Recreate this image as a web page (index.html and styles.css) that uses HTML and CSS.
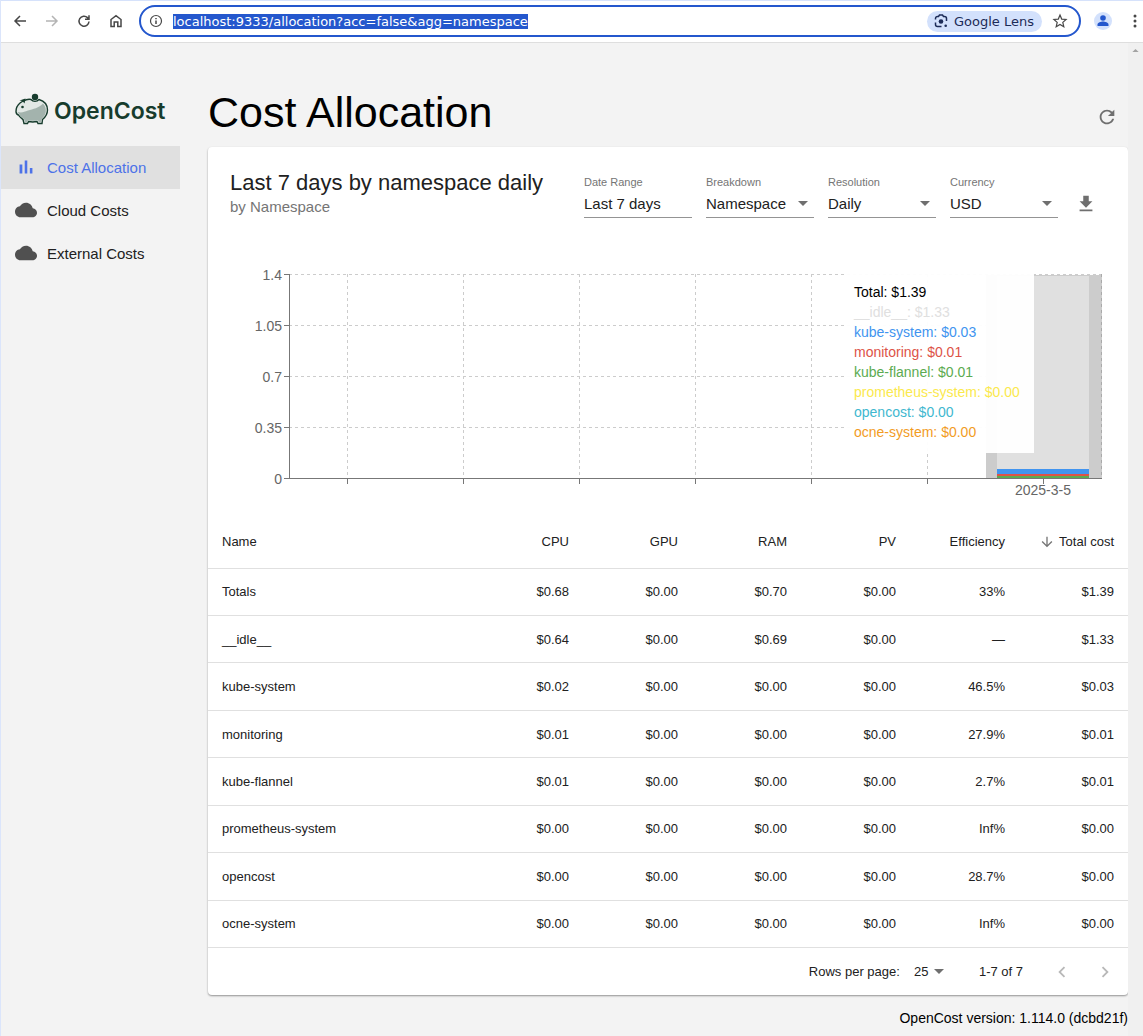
FILE: index.html
```html
<!DOCTYPE html>
<html lang="en">
<head>
    <meta charset="utf-8">
    <title>OpenCost</title>
    <meta name="viewport" content="width=device-width, initial-scale=1.0">
    <link rel="stylesheet" href="styles.css">
</head>
<body>

<header class="toolbar">
    <button class="tool" aria-label="Back">
        <svg viewBox="0 0 16 16"><path d="M14 8H3M8 3L3 8l5 5" class="line"/></svg>
    </button>
    <button class="tool tool-off" aria-label="Forward" disabled>
        <svg viewBox="0 0 16 16"><path d="M2 8h11M8 3l5 5-5 5" class="line"/></svg>
    </button>
    <button class="tool" aria-label="Reload">
        <svg viewBox="0 0 16 16"><path d="M13 8.500A5 5 0 1 1 11.500 4.600L13 6M13 2.200v4H9" class="line"/></svg>
    </button>
    <button class="tool" aria-label="Home">
        <svg viewBox="0 0 16 16"><path d="M3 13.500V6.500L8 2.600l5 3.900v7H9.800V9H6.200v4.500z" class="line"/></svg>
    </button>
    <div class="omnibox">
        <svg class="info" viewBox="0 0 16 16"><circle cx="8" cy="8" r="5.500" class="line thin"/><path d="M8 7.500V11M8 5v1.300" class="line"/></svg>
        <div class="address"><a class="url" href="#">localhost:9333/allocation?acc=false&amp;agg=namespace</a></div>
        <button class="lens">
            <svg viewBox="0 0 16 16"><path d="M2.500 6.500V5.500a2 2 0 0 1 2-2h1l1-1.500h3l1 1.500h1a2 2 0 0 1 2 2v2.500M2.500 9.500v2a2 2 0 0 0 2 2h4" class="line"/><circle cx="8" cy="8.500" r="2.300"/><circle cx="12.700" cy="12.800" r="1.300"/></svg>
            Google Lens
        </button>
        <button class="star" aria-label="Bookmark">
            <svg viewBox="0 0 16 16"><path d="M8 2l1.700 4.100 4.400.4-3.300 2.900 1 4.300L8 11.400l-3.800 2.300 1-4.300L1.900 6.500l4.400-.4z" class="line thin"/></svg>
        </button>
    </div>
    <button class="profile" aria-label="Profile">
        <svg viewBox="0 0 18 18"><circle cx="9" cy="6" r="2.800"/><path d="M3.500 14v-1.500c0-2 3.500-3 5.500-3s5.500 1 5.500 3V14z"/></svg>
    </button>
    <button class="more" aria-label="Menu">
        <svg viewBox="0 0 16 16"><circle cx="8" cy="3" r="1.500"/><circle cx="8" cy="8" r="1.500"/><circle cx="8" cy="13" r="1.500"/></svg>
    </button>
</header>

<div class="page">
    <nav class="sidebar">
        <a class="logo" href="#">
            <svg viewBox="0 0 34 34">
                <path class="pig" d="M8 8C11 6.500 14 6 16 6.500C18 9 22 9 24 6.500C29 8 32.500 12 32.500 17C32.500 21 30.500 24 27.500 26.500L27 30.500H23L22 28.500C19.500 29 16 29 13.500 28.500L12.500 30.500H9L8 26.500C6 25 4.500 24 3.500 22C1.500 21.500 1 20.500 1 18.500C1 15 2 12.500 5 10z"/>
                <path class="belly" d="M2.500 19C7 20 9 19 13 17.500C18 16 24 15 28 10.500C32 15 32 21 27 25.500L26 29.500h-2l-1.200-2.200C20 28 16 28 13 27.300L12 29.500H10L9 26C6.500 24.500 5 23 4 21z"/>
                <path d="M4.500 7.500L10.500 5.500L9.500 10.500L7.500 8z"/>
                <circle cx="7.500" cy="14" r="1.300"/>
                <circle cx="20" cy="4" r="3.200"/>
            </svg>
            <span>OpenCost</span>
        </a>
        <a class="nav-item active" href="#">
            <svg viewBox="0 0 24 24"><path d="M5 9.200h3V19H5zM10.600 5h2.800v14h-2.800zm5.600 8H19v6h-2.800z"/></svg>
            Cost Allocation
        </a>
        <a class="nav-item" href="#">
            <svg viewBox="0 0 24 24"><path d="M19.350 10.040C18.670 6.590 15.640 4 12 4 9.110 4 6.600 5.640 5.350 8.040 2.340 8.360 0 10.910 0 14c0 3.310 2.690 6 6 6h13c2.760 0 5-2.240 5-5 0-2.640-2.050-4.780-4.650-4.960z"/></svg>
            Cloud Costs
        </a>
        <a class="nav-item" href="#">
            <svg viewBox="0 0 24 24"><path d="M19.350 10.040C18.670 6.590 15.640 4 12 4 9.110 4 6.600 5.640 5.350 8.040 2.340 8.360 0 10.910 0 14c0 3.310 2.690 6 6 6h13c2.760 0 5-2.240 5-5 0-2.640-2.050-4.780-4.650-4.960z"/></svg>
            External Costs
        </a>
    </nav>

    <main class="main">
        <div class="heading">
            <h1>Cost Allocation</h1>
            <button class="icon-button" aria-label="Refresh">
                <svg viewBox="0 0 24 24"><path d="M17.650 6.350C16.200 4.900 14.210 4 12 4c-4.420 0-7.990 3.580-7.990 8s3.570 8 7.990 8c3.730 0 6.840-2.550 7.730-6h-2.080c-.82 2.330-3.040 4-5.650 4-3.310 0-6-2.690-6-6s2.690-6 6-6c1.660 0 3.140.69 4.220 1.780L13 11h7V4l-2.350 2.350z"/></svg>
            </button>
        </div>

        <section class="card">
            <div class="card-head">
                <div class="card-title">
                    <h2>Last 7 days by namespace daily</h2>
                    <p>by Namespace</p>
                </div>
                <form class="controls">
                    <div class="field">
                        <label for="range">Date Range</label>
                        <input type="text" id="range" value="Last 7 days" readonly>
                    </div>
                    <div class="field">
                        <label for="breakdown">Breakdown</label>
                        <div class="select"><select id="breakdown"><option>Namespace</option></select></div>
                    </div>
                    <div class="field">
                        <label for="resolution">Resolution</label>
                        <div class="select"><select id="resolution"><option>Daily</option></select></div>
                    </div>
                    <div class="field">
                        <label for="currency">Currency</label>
                        <div class="select"><select id="currency"><option>USD</option></select></div>
                    </div>
                    <button type="button" class="icon-button" aria-label="Download">
                        <svg viewBox="0 0 24 24"><path d="M19 9h-4V3H9v6H5l7 7 7-7zM5 18v2h14v-2H5z"/></svg>
                    </button>
                </form>
            </div>

            <div class="chart">
                <svg viewBox="0 0 920 256">
                    <path class="grid" d="M81 14.500H894M81 65.500H894M81 116.500H894M81 167.500H894M139.500 14V218M255.500 14V218M371.500 14V218M487.500 14V218M603.500 14V218M719.500 14V218"/>
                    <!-- hovered day and its stacked bar -->
                    <rect x="778" y="15" width="116" height="203" fill="#ccc"/>
                    <rect x="789" y="16" width="92" height="202" fill="#e0e0e0"/>
                    <rect x="789" y="209" width="92" height="5" fill="#4194ef"/>
                    <rect x="789" y="214" width="92" height="2" fill="#dd5347"/>
                    <rect x="789" y="216" width="92" height="2" fill="#5cab51"/>
                    <path class="grid edge" d="M893.500 14V218"/>
                    <path class="axis" d="M81.500 14V218M76 14.500h5M76 65.500h5M76 116.500h5M76 167.500h5M76 218.500H894M139.500 218v6M255.500 218v6M371.500 218v6M487.500 218v6M603.500 218v6M719.500 218v6M835.500 218v6"/>
                    <g class="y-labels">
                        <text x="74" y="20">1.4</text>
                        <text x="74" y="71">1.05</text>
                        <text x="74" y="122">0.7</text>
                        <text x="74" y="173">0.35</text>
                        <text x="74" y="224">0</text>
                    </g>
                    <text class="x-label" x="835" y="235">2025-3-5</text>
                </svg>
                <ul class="tooltip">
                    <li>Total: $1.39</li>
                    <li class="idle">__idle__: $1.33</li>
                    <li class="blue">kube-system: $0.03</li>
                    <li class="red">monitoring: $0.01</li>
                    <li class="green">kube-flannel: $0.01</li>
                    <li class="yellow">prometheus-system: $0.00</li>
                    <li class="cyan">opencost: $0.00</li>
                    <li class="orange">ocne-system: $0.00</li>
                </ul>
            </div>

            <table class="costs">
                <thead>
                    <tr>
                        <th class="name">Name</th><th>CPU</th><th>GPU</th><th>RAM</th><th>PV</th><th>Efficiency</th>
                        <th><svg viewBox="0 0 24 24"><path d="M20 12l-1.410-1.410L13 16.170V4h-2v12.170l-5.580-5.590L4 12l8 8 8-8z"/></svg>Total cost</th>
                    </tr>
                </thead>
                <tbody>
                    <tr><td>Totals</td><td>$0.68</td><td>$0.00</td><td>$0.70</td><td>$0.00</td><td>33%</td><td>$1.39</td></tr>
                    <tr><td>__idle__</td><td>$0.64</td><td>$0.00</td><td>$0.69</td><td>$0.00</td><td>—</td><td>$1.33</td></tr>
                    <tr><td>kube-system</td><td>$0.02</td><td>$0.00</td><td>$0.00</td><td>$0.00</td><td>46.5%</td><td>$0.03</td></tr>
                    <tr><td>monitoring</td><td>$0.01</td><td>$0.00</td><td>$0.00</td><td>$0.00</td><td>27.9%</td><td>$0.01</td></tr>
                    <tr><td>kube-flannel</td><td>$0.01</td><td>$0.00</td><td>$0.00</td><td>$0.00</td><td>2.7%</td><td>$0.01</td></tr>
                    <tr><td>prometheus-system</td><td>$0.00</td><td>$0.00</td><td>$0.00</td><td>$0.00</td><td>Inf%</td><td>$0.00</td></tr>
                    <tr><td>opencost</td><td>$0.00</td><td>$0.00</td><td>$0.00</td><td>$0.00</td><td>28.7%</td><td>$0.00</td></tr>
                    <tr><td>ocne-system</td><td>$0.00</td><td>$0.00</td><td>$0.00</td><td>$0.00</td><td>Inf%</td><td>$0.00</td></tr>
                </tbody>
            </table>

            <div class="pagination">
                <label for="rows">Rows per page:</label>
                <div class="select rows"><select id="rows"><option>25</option></select></div>
                <span class="count">1-7 of 7</span>
                <button aria-label="Previous page" disabled>
                    <svg viewBox="0 0 24 24"><path d="M15.410 7.410L14 6l-6 6 6 6 1.410-1.410L10.830 12z"/></svg>
                </button>
                <button aria-label="Next page" disabled>
                    <svg viewBox="0 0 24 24"><path d="M10 6L8.590 7.410 13.170 12l-4.580 4.590L10 18l6-6z"/></svg>
                </button>
            </div>
        </section>

        <footer>OpenCost version: 1.114.0 (dcbd21f)</footer>
    </main>

    <div class="scrollbar"><svg viewBox="0 0 8 5"><path d="M0 5l4-4 4 4z"/></svg></div>
</div>

</body>
</html>
```
FILE: styles.css
```css
* {
    box-sizing: border-box;
}
body {
    margin: 0;
    min-height: 100vh;
    display: flex;
    flex-direction: column;
    font-family: "Liberation Sans", Arial, sans-serif;
    font-size: 15px;
    color: #212121;
    background-color: #f3f3f3;
    border-left: 1px solid #dbe5fb;
}
h1, h2, p, ul {
    margin: 0;
    padding: 0;
    font-weight: normal;
}
button {
    border: none;
    background: none;
    padding: 0;
    font: inherit;
    color: inherit;
}
a {
    color: inherit;
    text-decoration: none;
}
svg {
    display: block;
    flex: none;
    fill: currentColor;
}
.line {
    fill: none;
    stroke: currentColor;
    stroke-width: 1.5;
}
.thin {
    stroke-width: 1.2;
}

/* browser toolbar */
.toolbar {
    display: flex;
    align-items: center;
    height: 43px;
    padding: 0 0 1px 11px;
    background-color: #fff;
    border-top: 1px solid #d6e2fb;
    border-bottom: 1px solid #dedede;
    color: #474747;
}
.tool {
    width: 16px;
    margin-right: 16px;
}
.tool-off {
    color: #b4b4b4;
}
.omnibox {
    flex: 1;
    display: flex;
    align-items: center;
    height: 32px;
    margin-left: -1px;
    padding: 0 11px 0 7px;
    border: 2px solid #2457cd;
    border-radius: 16px;
    font-family: "DejaVu Sans", sans-serif;
    font-size: 13px;
}
.info {
    width: 16px;
    margin-right: 9px;
}
.address {
    flex: 1;
}
.url {
    color: #fff;
    background-color: #2457cd;
}
.lens {
    display: flex;
    align-items: center;
    gap: 5px;
    height: 21px;
    padding: 0 8px 0 6px;
    border-radius: 11px;
    background-color: #d3e1fc;
    color: #1c2b57;
}
.lens svg {
    width: 16px;
}
.star {
    width: 16px;
    margin-left: 10px;
}
.profile {
    width: 18px;
    margin-left: 13px;
    border-radius: 50%;
    background-color: #d3e1fc;
    color: #2457cd;
}
.more {
    width: 16px;
    margin-left: 15px;
}

/* page */
.page {
    flex: 1;
    display: flex;
}
.sidebar {
    width: 179px;
    padding-top: 48px;
}
.logo {
    display: flex;
    align-items: center;
    gap: 5px;
    height: 55px;
    padding: 0 0 18px 14px;
    font-family: Inter, sans-serif;
    font-size: 23px;
    font-weight: 600;
    color: #173c2d;
}
.logo svg {
    width: 34px;
}
.logo span {
    padding-top: 3px;
}
.pig {
    fill: #e2e8e5;
    stroke: #173c2d;
    stroke-width: 1.4;
}
.belly {
    fill: #a3b3ad;
}
.nav-item {
    display: flex;
    align-items: center;
    gap: 10px;
    height: 43px;
    padding: 0 0 1px 14px;
}
.nav-item svg {
    width: 22px;
    color: #505050;
}
.active, .active svg {
    color: #4d72e8;
}
.active {
    background-color: #e0e0e0;
}
.main {
    flex: 1;
    min-width: 0;
    padding: 41px 0 0 28px;
}
.heading {
    display: flex;
    justify-content: space-between;
    height: 63px;
    padding-right: 10px;
}
h1 {
    font-size: 43px;
    line-height: 56px;
    color: #000;
}
.icon-button {
    align-self: flex-end;
    width: 22px;
    color: #6f6f6f;
}
.heading .icon-button {
    padding-bottom: 19px;
}
.card {
    background-color: #fff;
    border-radius: 4px;
    box-shadow: 0 1px 2px rgba(0, 0, 0, 0.4);
}
.card-head {
    display: flex;
    justify-content: space-between;
    padding: 22px 31px 0 22px;
}
h2 {
    font-size: 22px;
    line-height: 28px;
}
.card-title p {
    line-height: 20px;
    color: #757575;
}
.controls {
    display: flex;
    gap: 14px;
    padding-top: 6px;
}
.controls .icon-button {
    margin: 0 0 3px 3px;
}
.field {
    width: 108px;
}
.field label {
    display: block;
    font-size: 11px;
    line-height: 14px;
    color: #757575;
}
.field input, .field select {
    width: 100%;
    height: 29px;
    border-bottom: 1px solid #949494;
}
input, select {
    appearance: none;
    display: block;
    margin: 0;
    padding: 0;
    border: none;
    border-radius: 0;
    background: none;
    font: inherit;
    color: inherit;
}
.select {
    display: grid;
    align-items: center;
}
.select select {
    grid-area: 1 / 1;
}
.select::after {
    content: "";
    grid-area: 1 / 1;
    justify-self: end;
    margin-right: 6px;
    border: 5px solid transparent;
    border-top-color: #6f6f6f;
    border-bottom: none;
    pointer-events: none;
}

/* chart */
.chart {
    position: relative;
    margin-top: 42px;
    font-size: 14px;
}
.chart > svg {
    width: 100%;
}
.grid, .axis {
    fill: none;
    stroke: #ccc;
    stroke-dasharray: 3 3;
}
.edge {
    stroke: #aaa;
}
.axis {
    stroke: #777;
    stroke-dasharray: none;
}
.chart text {
    fill: #666;
}
.y-labels {
    text-anchor: end;
}
.x-label {
    text-anchor: middle;
}
.tooltip {
    position: absolute;
    top: 14px;
    right: 94px;
    width: 190px;
    padding: 8px 10px 11px;
    background-color: rgba(255, 255, 255, 0.95);
    list-style: none;
    line-height: 20px;
    color: #000;
}
.idle { color: #e0e0e0; }
.blue { color: #4194ef; }
.red { color: #dd5347; }
.green { color: #5cab51; }
.yellow { color: #fbe94e; }
.cyan { color: #3fb8cf; }
.orange { color: #f29c1f; }

/* table */
.costs {
    width: 100%;
    height: 432px;
    table-layout: fixed;
    border-collapse: collapse;
    font-size: 13px;
}
th, td {
    width: 109px;
    padding: 0 14px;
    border-bottom: 1px solid #e0e0e0;
    text-align: right;
    font-weight: normal;
    white-space: nowrap;
}
th {
    height: 52px;
}
td {
    height: 47px;
}
.name {
    width: auto;
}
.name, td:first-child {
    text-align: left;
}
th svg {
    display: inline-block;
    width: 16px;
    margin-right: 4px;
    vertical-align: -4px;
    color: #757575;
}
.pagination {
    display: flex;
    align-items: center;
    justify-content: flex-end;
    height: 47px;
    padding-right: 12px;
    font-size: 13px;
}
.rows {
    width: 36px;
    margin: 0 29px 0 14px;
}
.count {
    margin-right: 28px;
}
.pagination button {
    width: 22px;
    color: #b8b8b8;
}
.pagination button + button {
    margin-left: 21px;
}
footer {
    padding-top: 15px;
    text-align: right;
    font-size: 14px;
    color: #000;
}
.scrollbar {
    width: 15px;
    padding: 5px 4px;
    background-color: #f0f0f0;
    color: #a3a3a3;
}
```
